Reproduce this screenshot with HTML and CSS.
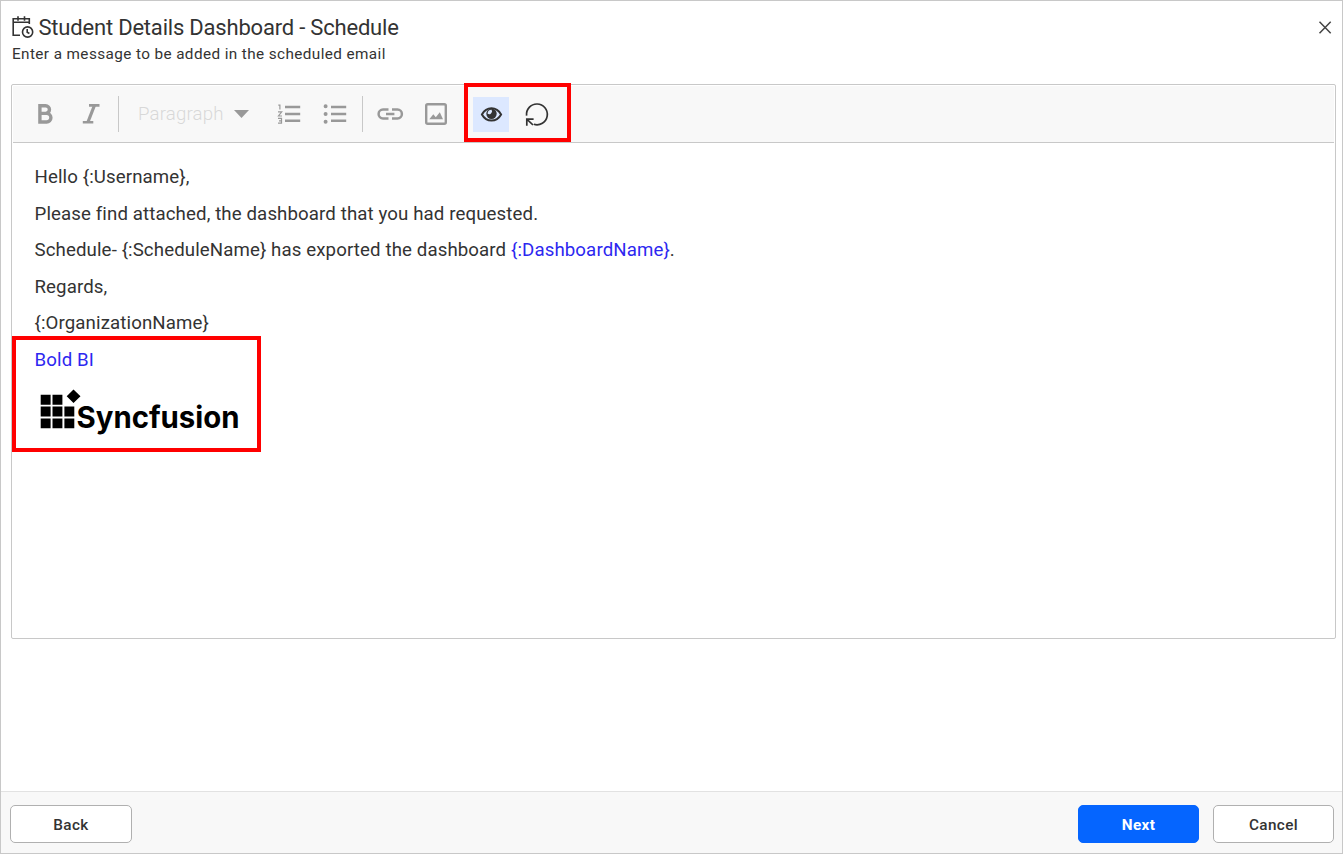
FILE: index.html
```html
<!DOCTYPE html>
<html lang="en">
<head>
<meta charset="utf-8">
<title>Student Details Dashboard - Schedule</title>
<link rel="stylesheet" href="styles.css">
</head>
<body>
<div class="dialog">
  <header class="header">
    <div>
      <div class="title-row">
        <svg class="title-icon" width="22" height="24" viewBox="0 0 22 24" fill="none" stroke="#333" stroke-width="1.6">
          <path d="M8 20.2H1.2V3.7H17.3V9M1.2 7.2H17.3M6 1.2V5.8M12.5 1.2V5.8"/>
          <circle cx="15.6" cy="17" r="5.1"/>
          <path d="M15.2 14.1V17.2L17.4 18.5"/>
        </svg>
        <h1 class="title">Student Details Dashboard - Schedule</h1>
      </div>
      <p class="subtitle">Enter a message to be added in the scheduled email</p>
    </div>
    <button class="close" aria-label="Close">
      <svg width="14" height="14" viewBox="0 0 14 14" stroke="#444" stroke-width="1.5"><path d="M1.5 1.8L12.7 13.2M12.7 1.8L1.5 13.2"/></svg>
    </button>
  </header>

  <section class="editor">
    <div class="toolbar">
      <svg class="tool" viewBox="0 0 36 36" fill="none" stroke="#999" stroke-width="3.4"><path d="M12.2 9.7H18.6A3.5 3.5 0 0 1 18.6 17.4H12.2M12.2 17.4H19.6A4.1 4.1 0 0 1 19.6 26H12.2M12.9 8V27.7"/></svg>
      <svg class="tool" viewBox="0 0 36 36" fill="none" stroke="#999" stroke-width="2.6"><path d="M16 9.4H26.5M9.8 26.2H20.3"/><path stroke-width="3.2" d="M21.4 9.5L15 26"/></svg>
      <span class="sep"></span>
      <div class="format"><span class="format-name">Paragraph</span><svg width="15" height="8" viewBox="0 0 15 8"><path fill="#999" d="M0 0H15L7.5 8Z"/></svg></div>
      <svg class="tool" viewBox="0 0 36 36" fill="none" stroke="#999" stroke-width="2.4"><path d="M14 11H29.2M14 18H29.2M14 24.8H29.2"/><path stroke-width="1.2" d="M7.3 9.2H8.9V13.6M7 15.8H10.7L7.5 20H11M7 22.4H10.5V27.2H7M8 24.8H10.5"/></svg>
      <svg class="tool" viewBox="0 0 36 36" fill="none" stroke="#999" stroke-width="2.4"><path d="M14 11H29.2M14 18H29.2M14 24.8H29.2"/><path stroke="none" fill="#999" d="M6.6 10.3a2 2 0 1 0 4 0a2 2 0 1 0-4 0M6.6 18a2 2 0 1 0 4 0a2 2 0 1 0-4 0M6.6 25.7a2 2 0 1 0 4 0a2 2 0 1 0-4 0"/></svg>
      <span class="sep sep-mid"></span>
      <svg class="tool" viewBox="0 0 36 36" fill="none" stroke="#999" stroke-width="2.5"><path d="M16.5 13.6H11A4.4 4.4 0 0 0 11 22.4H16.5M20 13.6H25.5A4.4 4.4 0 0 1 25.5 22.4H20M14 18H22.4"/></svg>
      <svg class="tool" viewBox="0 0 36 36" fill="none" stroke="#999" stroke-width="2.4"><rect x="8.2" y="8.2" width="19.6" height="19.6" rx="1.5"/><path fill="#999" stroke="none" d="M11.3 23.3L15.3 18.3L17.8 21.3L21.8 16.3L25 23.3Z"/></svg>
      <div class="callout-group">
        <svg class="tool tool-active" viewBox="0 0 36 35"><path fill="none" stroke="#333" stroke-width="2" d="M8.9 17.4C13.5 9.2 23.5 9.2 28.1 17.4C23.5 25.6 13.5 25.6 8.9 17.4Z"/><circle cx="18.5" cy="16.8" r="5.2" fill="#333"/><path d="M14.6 16.8A4 4 0 0 1 18.6 12.8A2.8 2.8 0 0 1 18 16.4A2.8 2.8 0 0 1 14.6 16.8Z" fill="#dce8ff"/></svg>
        <svg class="tool" viewBox="0 0 36 35" fill="none" stroke="#333" stroke-width="1.7"><path d="M7.6 18.6A10.4 10.4 0 1 1 14.8 27.3"/><path d="M7.8 28.8V22.1H14.6M7.8 22.1L14 28"/></svg>
      </div>
    </div>
    <div class="message">
      <p>Hello {:Username},</p>
      <p>Please find attached, the dashboard that you had requested.</p>
      <p>Schedule- {:ScheduleName} has exported the dashboard <a>{:DashboardName}</a>.</p>
      <p>Regards,</p>
      <p>{:OrganizationName}</p>
      <div class="signature">
        <p><a>Bold BI</a></p>
        <svg class="logo" width="218" height="56" viewBox="0 0 218 56">
          <path d="M5.7 6.8h9.9v9.9H5.7zM17.5 6.8h9.9v9.9h-9.9zM5.7 18.6h9.9v9.9H5.7zM17.5 18.6h9.9v9.9h-9.9zM29.4 18.6h9.9v9.9h-9.9zM5.7 30.4h9.9v9.9H5.7zM17.5 30.4h9.9v9.9h-9.9zM29.4 30.4h9.9v9.9h-9.9zM38.5 1.5L45.5 8.2L38.5 15L31.7 8.2z"/>
          <text class="logo-text" x="41.5" y="40.3" textLength="163" lengthAdjust="spacingAndGlyphs">Syncfusion</text>
        </svg>
      </div>
    </div>
  </section>

  <footer class="footer">
    <button class="btn">Back</button>
    <button class="btn btn-primary">Next</button>
    <button class="btn btn-cancel">Cancel</button>
  </footer>
</div>
</body>
</html>
```
FILE: styles.css
```css
* { box-sizing: border-box; }
body { margin: 0; font-family: Roboto, "Liberation Sans", sans-serif; color: #333; background: #fff; }
h1, p { margin: 0; font-weight: 400; }
svg { display: block; flex: none; }
button { font-family: inherit; padding: 0; }

.dialog { width: 1343px; height: 854px; border: 1px solid #c8c8c8; display: flex; flex-direction: column; }
.header { height: 83px; padding: 13px 10px 0 11px; display: flex; justify-content: space-between; }
.title-row { display: flex; height: 28px; gap: 4.5px; }
.title-icon { margin-top: 1px; }
.title { font-size: 22px; line-height: 28px; letter-spacing: -0.2px; white-space: nowrap; }
.subtitle { font-size: 15.3px; line-height: 24px; letter-spacing: 0.4px; }
.close { width: 14px; height: 14px; margin-top: 6px; border: 0; background: none; }

.editor { margin: 0 6px 0 10px; height: 555px; border: 1px solid #c8c8c8; border-radius: 2px; }
.toolbar { height: 58px; margin: 0 1px; padding-left: 14px; border-top: 1px solid #fff; border-bottom: 1px solid #c8c8c8; background: #f8f8f8; display: flex; align-items: center; }
.tool { width: 36px; height: 36px; margin-right: 10px; }
.sep { width: 1px; height: 36px; margin: 0 19px 0 -1px; background: #c8c8c8; }
.sep-mid { margin: 0 9px 0 -1px; }
.format { display: flex; align-items: center; justify-content: space-between; width: 133px; padding-right: 22px; color: #d8d8d8; font-size: 18.67px; }
.format-name { font-weight: 300; letter-spacing: 0.15px; }
.callout-group { height: 59px; width: 107px; border: 4px solid #f00; margin: -3px 0 0; padding: 10px 0 0 5px; display: flex; }
.callout-group .tool { height: 35px; }
.tool-active { background: #dce8ff; }

.message { padding: 16px 0 0; font-size: 18.67px; line-height: 36.5px; letter-spacing: 0.11px; }
.message p { padding-left: 22.5px; white-space: nowrap; }
.message a { color: #2d27f0; }
.signature { width: 249px; height: 116px; margin-top: -5.5px; border: 4px solid #f00; }
.signature p { padding-left: 18.5px; padding-top: 1.6px; height: 40px; }
.logo { margin: 8px 0 0 19px; }
.logo-text { font: 700 30px Inter, sans-serif; letter-spacing: 0; fill: #000; }

.footer { margin-top: auto; height: 62px; padding: 13px 8px 0 9px; border-top: 1px solid #e2e2e2; background: #f8f8f8; display: flex; gap: 14px; }
.btn { width: 122px; height: 38px; padding-top: 1px; border: 1px solid #b0b0b0; border-radius: 5px; background: #fff; color: #333; font-size: 15.3px; font-weight: 500; letter-spacing: 0.35px; }
.btn-primary { width: 121px; margin-left: auto; border-color: #0565ff; background: #0565ff; color: #fff; font-weight: 700; }
.btn-cancel { width: 121px; }
```
